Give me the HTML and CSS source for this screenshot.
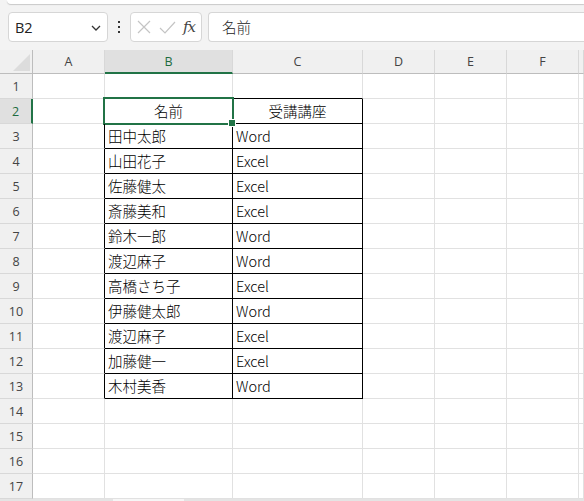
FILE: index.html
```html
<!DOCTYPE html>
<html lang="ja">
<head>
<meta charset="utf-8">
<link rel="stylesheet" href="styles.css">
</head>
<body>
<div class="ribbon-edge"></div>
<div class="fbar">
  <div class="namebox">
    <span class="nb-text">B2</span>
    <svg class="chev" width="10" height="6" viewBox="0 0 10 6"><path d="M1 1 L5 5 L9 1" fill="none" stroke="#333" stroke-width="1.3"/></svg>
  </div>
  <div class="dots"><i></i><i></i><i></i></div>
  <div class="funcbox">
    <svg width="14" height="14" viewBox="0 0 14 14"><path d="M1 1 L13 13 M13 1 L1 13" stroke="#c4c4c4" stroke-width="1.2" fill="none"/></svg>
    <svg width="17" height="13" viewBox="0 0 17 13"><path d="M1 7 L6 12 L16 1" stroke="#c4c4c4" stroke-width="1.2" fill="none"/></svg>
    <span class="fx">fx</span>
  </div>
  <div class="finput">名前</div>
</div>
<div class="grid">
  <div class="corner"><svg width="17" height="17" viewBox="0 0 17 17"><polygon points="17,0 17,17 0,17" fill="#dcdcdc"/></svg></div>
  <div class="ch">A</div><div class="ch sel">B</div><div class="ch">C</div><div class="ch">D</div><div class="ch">E</div><div class="ch">F</div><div class="ch last"></div>

  <div class="rh">1</div><div class="c"></div><div class="c tb"></div><div class="c tb"></div><div class="c"></div><div class="c"></div><div class="c"></div><div class="c"></div>

  <div class="rh sel">2</div><div class="c tr"></div><div class="c t active center">名前</div><div class="c t center">受講講座</div><div class="c"></div><div class="c"></div><div class="c"></div><div class="c"></div>

  <div class="rh">3</div><div class="c tr"></div><div class="c t">田中太郎</div><div class="c t">Word</div><div class="c"></div><div class="c"></div><div class="c"></div><div class="c"></div>
  <div class="rh">4</div><div class="c tr"></div><div class="c t">山田花子</div><div class="c t">Excel</div><div class="c"></div><div class="c"></div><div class="c"></div><div class="c"></div>
  <div class="rh">5</div><div class="c tr"></div><div class="c t">佐藤健太</div><div class="c t">Excel</div><div class="c"></div><div class="c"></div><div class="c"></div><div class="c"></div>
  <div class="rh">6</div><div class="c tr"></div><div class="c t">斎藤美和</div><div class="c t">Excel</div><div class="c"></div><div class="c"></div><div class="c"></div><div class="c"></div>
  <div class="rh">7</div><div class="c tr"></div><div class="c t">鈴木一郎</div><div class="c t">Word</div><div class="c"></div><div class="c"></div><div class="c"></div><div class="c"></div>
  <div class="rh">8</div><div class="c tr"></div><div class="c t">渡辺麻子</div><div class="c t">Word</div><div class="c"></div><div class="c"></div><div class="c"></div><div class="c"></div>
  <div class="rh">9</div><div class="c tr"></div><div class="c t">高橋さち子</div><div class="c t">Excel</div><div class="c"></div><div class="c"></div><div class="c"></div><div class="c"></div>
  <div class="rh">10</div><div class="c tr"></div><div class="c t">伊藤健太郎</div><div class="c t">Word</div><div class="c"></div><div class="c"></div><div class="c"></div><div class="c"></div>
  <div class="rh">11</div><div class="c tr"></div><div class="c t">渡辺麻子</div><div class="c t">Excel</div><div class="c"></div><div class="c"></div><div class="c"></div><div class="c"></div>
  <div class="rh">12</div><div class="c tr"></div><div class="c t">加藤健一</div><div class="c t">Excel</div><div class="c"></div><div class="c"></div><div class="c"></div><div class="c"></div>
  <div class="rh">13</div><div class="c tr"></div><div class="c t">木村美香</div><div class="c t">Word</div><div class="c"></div><div class="c"></div><div class="c"></div><div class="c"></div>

  <div class="rh">14</div><div class="c"></div><div class="c"></div><div class="c"></div><div class="c"></div><div class="c"></div><div class="c"></div><div class="c"></div>
  <div class="rh">15</div><div class="c"></div><div class="c"></div><div class="c"></div><div class="c"></div><div class="c"></div><div class="c"></div><div class="c"></div>
  <div class="rh">16</div><div class="c"></div><div class="c"></div><div class="c"></div><div class="c"></div><div class="c"></div><div class="c"></div><div class="c"></div>
  <div class="rh">17</div><div class="c"></div><div class="c"></div><div class="c"></div><div class="c"></div><div class="c"></div><div class="c"></div><div class="c"></div>
</div>
<div class="bottombar"><div class="tab"></div></div>
</body>
</html>
```
FILE: styles.css
```css
* { box-sizing: border-box; }
html, body { margin: 0; padding: 0; }
body {
  width: 584px;
  height: 501px;
  overflow: hidden;
  background: #f3f3f3;
  font-family: "Noto Sans CJK JP", "Noto Sans", sans-serif;
  color: #1a1a1a;
}
.ribbon-edge {
  height: 4px;
  margin-left: 7px;
  background: #fff;
  border-bottom-left-radius: 6px;
  box-shadow: 0 1px 1px #c9c9c9;
}
.fbar {
  display: flex;
  align-items: center;
  height: 30px;
  margin-top: 8px;
  padding-left: 8px;
}
.namebox {
  width: 100px;
  height: 30px;
  background: #fff;
  border: 1px solid #d6d6d6;
  border-radius: 4px;
  display: flex;
  align-items: center;
  justify-content: space-between;
  padding: 0 6px 0 6px;
}
.nb-text {
  font-family: "Open Sans", "Noto Sans", sans-serif;
  font-size: 14.5px;
  color: #222;
}
.chev { margin-top: 2px; }
.dots {
  width: 22px;
  display: flex;
  flex-direction: column;
  align-items: center;
  gap: 3px;
}
.dots i {
  display: block;
  width: 2px;
  height: 2px;
  background: #333;
}
.funcbox {
  width: 72px;
  height: 30px;
  background: #fff;
  border: 1px solid #d6d6d6;
  border-radius: 4px;
  display: flex;
  align-items: center;
  padding-left: 6px;
  gap: 8px;
}
.fx {
  font-family: "DejaVu Serif", "Liberation Serif", serif;
  font-style: italic;
  font-size: 15px;
  color: #444;
  margin-left: -1px;
  letter-spacing: -1px;
}
.finput {
  flex: 1;
  height: 30px;
  margin-left: 6px;
  background: #fff;
  border: 1px solid #d6d6d6;
  border-right: none;
  border-radius: 4px 0 0 4px;
  padding-left: 13px;
  font-size: 14.5px;
  font-weight: 300;
  line-height: 28px;
  color: #222;
}
.grid {
  margin-top: 8px;
  display: grid;
  grid-template-columns: 33px 72px 128px 130px 72px 72px 72px 1fr;
  grid-template-rows: 24px repeat(17, 25px);
  background: #fff;
}
.corner {
  background: #f0f0f0;
  border-right: 1px solid #bdbdbd;
  border-bottom: 1px solid #bdbdbd;
  padding: 4px 0 0 13px;
}
.corner svg { display: block; }
.ch {
  background: #f0f0f0;
  border-right: 1px solid #d8d8d8;
  border-bottom: 1px solid #bdbdbd;
  font-family: "Open Sans", "Noto Sans", sans-serif;
  font-size: 12.5px;
  color: #444;
  display: flex;
  align-items: center;
  justify-content: center;
}
.ch.sel {
  background: #e0e0e0;
  color: #1d6b3f;
  border-bottom: 2px solid #217346;
}
.rh {
  background: #f0f0f0;
  border-right: 1px solid #bdbdbd;
  border-bottom: 1px solid #d8d8d8;
  font-family: "Open Sans", "Noto Sans", sans-serif;
  font-size: 12.5px;
  color: #444;
  display: flex;
  align-items: center;
  justify-content: center;
}
.rh.sel {
  background: #e0e0e0;
  color: #1d6b3f;
  border-right: 2px solid #217346;
}
.c {
  border-right: 1px solid #e1e1e1;
  border-bottom: 1px solid #e1e1e1;
  font-size: 14.5px;
  font-weight: 300;
  line-height: 24px;
  padding-left: 3px;
  color: #000;
  white-space: nowrap;
  position: relative;
}
.c.tr { border-right-color: #000; }
.c.tb { border-bottom-color: #000; }
.c.t { border-right-color: #000; border-bottom-color: #000; }
.c.center { text-align: center; padding-left: 0; }
.c.active::after {
  content: "";
  position: absolute;
  left: -2px;
  top: -2px;
  right: -2px;
  bottom: -2px;
  border: 2px solid #217346;
}
.c.active::before {
  content: "";
  position: absolute;
  right: -4px;
  bottom: -4px;
  width: 6px;
  height: 6px;
  background: #217346;
  border: 1px solid #fff;
  z-index: 2;
}
.bottombar {
  height: 2px;
  background: #e4e4e4;
}
.tab {
  margin-left: 113px;
  width: 71px;
  height: 2px;
  background: #f6f6f6;
}
```
